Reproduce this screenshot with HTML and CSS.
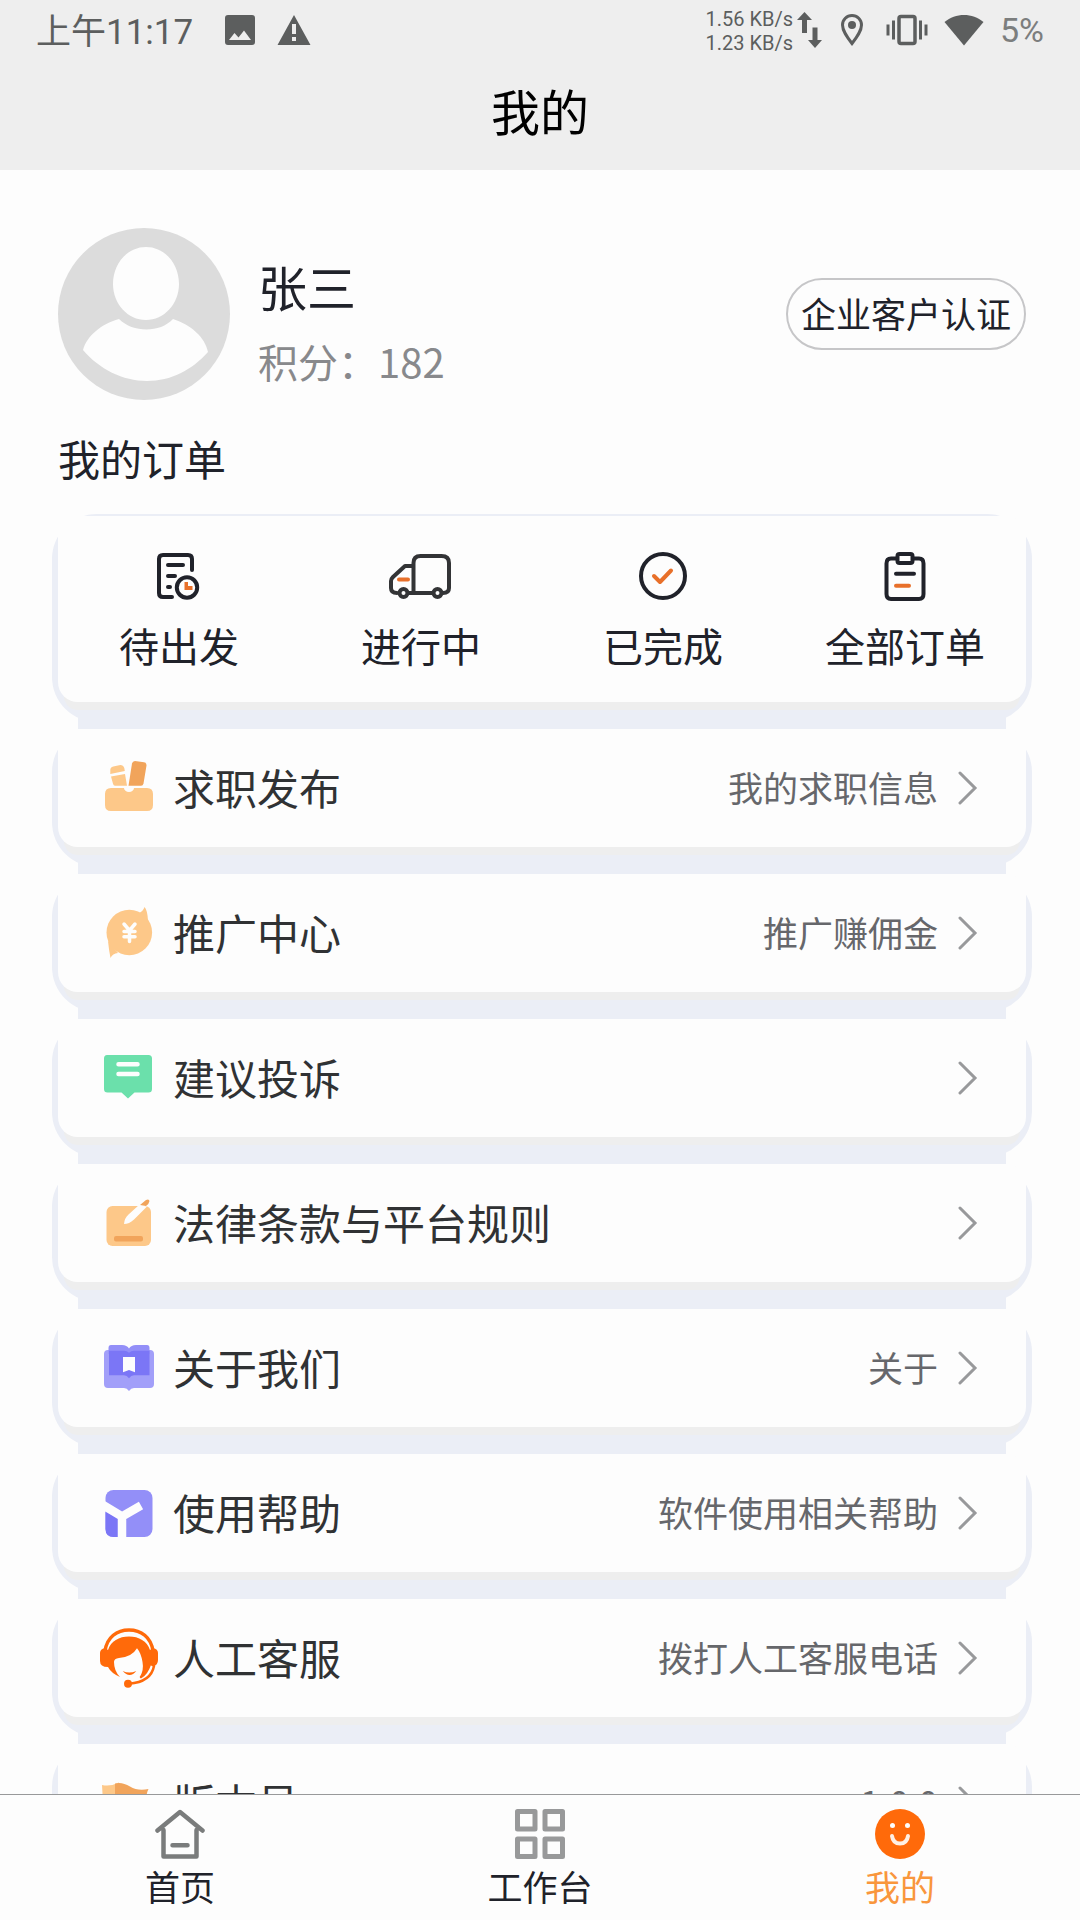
FILE: index.html
```html
<!DOCTYPE html>
<html lang="zh-CN">
<head>
<meta charset="utf-8">
<meta name="viewport" content="width=device-width, initial-scale=1">
<title>我的</title>
<link rel="stylesheet" href="styles.css">
</head>
<body>
<header class="header">
  <div class="status">
    <span class="clock">上午11:17</span>
    <svg class="ic-image" width="30" height="30" viewBox="0 0 30 30"><path fill="currentColor" fill-rule="evenodd" d="M3 0h24a3 3 0 0 1 3 3v24a3 3 0 0 1-3 3H3a3 3 0 0 1-3-3V3a3 3 0 0 1 3-3zM4 25h22l-7-9.500-5.500 7-4-4.500z"/></svg>
    <svg width="34" height="32" viewBox="0 0 34 32"><path fill="currentColor" fill-rule="evenodd" d="M17 1l16.500 30H.5zM15 10v10h4V10zM15 23v4h4v-4z"/></svg>
    <div class="status-right">
      <span class="speed">1.56 KB/s<br>1.23 KB/s</span>
      <svg class="ic-arrows" width="26" height="36" viewBox="0 0 26 36"><path fill="currentColor" d="M0 8l7.500-8L15 8h-5v13H5V8zM11 28l7 8 7-8h-4.500V15.500h-5V28z"/></svg>
      <svg class="ic-pin" width="24" height="34" viewBox="0 0 24 34"><path fill="none" stroke="currentColor" stroke-width="3" d="M12 30.500C7 24 2.500 18 2.500 12a9.500 9.500 0 0 1 19 0c0 6-4.500 12-9.500 18.500z"/><circle cx="12" cy="12" r="4" fill="currentColor"/></svg>
      <svg class="ic-vibrate" width="42" height="32" viewBox="0 0 42 32"><rect x="13" y="2.500" width="16" height="27" rx="2" fill="none" stroke="currentColor" stroke-width="3.500"/><path stroke="currentColor" stroke-width="3" d="M2 10.500v11M7.500 6.500v19M34.500 6.500v19M40 10.500v11"/></svg>
      <svg class="ic-wifi" width="40" height="32" viewBox="0 0 40 32"><path fill="currentColor" d="M20 31.500L.5 8C6 3.500 13 1 20 1s14 2.500 19.500 7z"/></svg>
      <span class="battery">5%</span>
    </div>
  </div>
  <h1 class="title">我的</h1>
</header>

<main class="content">
  <section class="profile">
    <svg class="avatar" viewBox="0 0 172 172"><circle cx="86" cy="86" r="86" fill="#dcdcdc"/><path fill="#fdfdfd" d="M88 19c19 0 33 17 33 37S106 92 88 92 55 76 55 56s14-37 33-37zM61 91c14 14 41 14 54 0 18 6 32 18 35 33-16 18-37 29-61 29s-48-12-64-31c4-14 18-26 36-31z"/></svg>
    <div class="who">
      <h2 class="name">张三</h2>
      <p class="points">积分：182</p>
    </div>
    <button class="verify" type="button">企业客户认证</button>
  </section>

  <h2 class="section-title">我的订单</h2>

  <nav class="card orders" aria-label="我的订单">
    <a class="order" href="#pending">
      <svg class="order-icon" viewBox="0 0 64 56"><g fill="none" stroke="#20222a" stroke-width="4" stroke-linecap="round"><path d="M45 22V11q0-4-4-4H16q-4 0-4 4v34q0 4 4 4h9M21 17h15M21 28h7M21 39h2"/><circle cx="40" cy="39.500" r="10.200"/></g><path fill="#e8702a" d="M37.500 34h3.500v4h4.500v4h-8z"/></svg>
      <span>待出发</span>
    </a>
    <a class="order" href="#ongoing">
      <svg class="order-icon" viewBox="0 0 64 56"><g fill="none" stroke="#333436" stroke-width="4" stroke-linecap="round" stroke-linejoin="round"><path d="M24.500 45V15q0-7 7-7h21q7.500 0 7.500 7v25q0 5-6 5M43 45H20M24 18h-8L4 29q-2 2-2 4v7q0 5 6 5"/><circle cx="14.500" cy="45" r="4"/><circle cx="48.500" cy="45" r="4"/></g><path stroke="#e8702a" stroke-width="4" stroke-linecap="round" d="M10 31.500h9"/></svg>
      <span>进行中</span>
    </a>
    <a class="order" href="#done">
      <svg class="order-icon" viewBox="0 0 64 56"><circle cx="32" cy="28" r="22" fill="none" stroke="#20222a" stroke-width="4"/><path fill="none" stroke="#e8702a" stroke-width="4" stroke-linecap="round" stroke-linejoin="round" d="M23 28l6 6 11-11.500"/></svg>
      <span>已完成</span>
    </a>
    <a class="order" href="#all">
      <svg class="order-icon" viewBox="0 0 64 56"><g fill="none" stroke="#20222a" stroke-width="4" stroke-linecap="round"><path d="M24 10.500h-6q-4.500 0-4.500 5v30.500q0 5 4.500 5h28q4.500 0 4.500-5V15.500q0-5-4.500-5H40M23 25.700h18"/><rect x="24.500" y="6" width="15" height="9" rx="2"/></g><path stroke="#e8702a" stroke-width="4" stroke-linecap="round" d="M23 37.700h13"/></svg>
      <span>全部订单</span>
    </a>
  </nav>

  <a class="card row" href="#jobs">
    <svg class="row-icon" viewBox="0 0 60 60"><path fill="#fdc889" d="M12 30h13a5 4 0 0 0 10 0h13q6 0 6 6v11q0 6-6 6H12q-6 0-6-6V36q0-6 6-6zM12 18.500l14-2.500 2 11.700H16q-1.500 0-2-2zM11.300 12q0-3 3-3.500l7-1.500q3 0 4 3l.5 3-14.500 3z"/><path fill="#f1a45b" d="M36 3l9 1.200q2.800.5 2.500 3.300l-3 18q-.5 2.300-2.500 2.300H29.500L33 5.500Q33.500 3 36 3z"/></svg>
    <span class="label">求职发布</span><span class="note">我的求职信息</span>
    <svg class="chevron" viewBox="0 0 20 34"><path d="M2 2l15 15L2 32"/></svg>
  </a>
  <a class="card row" href="#promo">
    <svg class="row-icon" viewBox="0 0 60 60"><circle cx="30.300" cy="29.500" r="22.800" fill="#fdc889"/><path fill="#fdc889" d="M40 10q4-1.500 5.500-6 3 3 3.500 14zM9 38q1 10 2.500 17 2-4.500 7.500-5z"/><path fill="none" stroke="#fdfdfd" stroke-width="3.500" stroke-linecap="round" d="M25 21l5.500 6.500L36 21M30.500 28v10.500M25 28.500h11M25 33.700h11"/></svg>
    <span class="label">推广中心</span><span class="note">推广赚佣金</span>
    <svg class="chevron" viewBox="0 0 20 34"><path d="M2 2l15 15L2 32"/></svg>
  </a>
  <a class="card row" href="#feedback">
    <svg class="row-icon" viewBox="0 0 60 60"><path fill="#6be0ab" d="M8 7h41.500q3.500 0 3.500 3.500v30.500q0 3.500-3.500 3.500H35.500l-6.500 6-6.500-6H8.500Q5 44.500 5 41V10.500Q5 7 8 7z"/><path stroke="#fdfdfd" stroke-width="4.500" stroke-linecap="round" d="M19.500 16.300h19M19.500 26h19"/></svg>
    <span class="label">建议投诉</span>
    <svg class="chevron" viewBox="0 0 20 34"><path d="M2 2l15 15L2 32"/></svg>
  </a>
  <a class="card row" href="#rules">
    <svg class="row-icon" viewBox="0 0 60 60"><rect x="7.500" y="13" width="44.500" height="40" rx="6" fill="#fdc889"/><path fill="#fdfdfd" d="M25 31q.5-6 4.500-9.500L40 12l8 1.500-13 13Q30 31 25 31z"/><path fill="#f1a45b" d="M41 12l6-5q3-1.500 3.500 1-.5 3-3.500 5zM17 43h25q2 0 2 2v1.500q0 2-2 2H17q-2 0-2-2V45q0-2 2-2z"/></svg>
    <span class="label">法律条款与平台规则</span>
    <svg class="chevron" viewBox="0 0 20 34"><path d="M2 2l15 15L2 32"/></svg>
  </a>
  <a class="card row" href="#about">
    <svg class="row-icon" viewBox="0 0 60 60"><path fill="#a29ff9" d="M9 12h42q4 0 4 4v30q0 4-4 4H35q-3 0-5 3-2-3-5-3H9q-4 0-4-4V16q0-4 4-4z"/><path fill="#938ff8" d="M12 7h11q5 0 7 3.500Q32 7 37 7h11q2.500 0 2.500 3v6h-41v-6q0-3 2.500-3z"/><path fill="#7b76f6" d="M10 12.700h15q3 0 5 2 2-2 5-2h15.500v24.600H35q-3 0-5 3-2-3-5-3H10z"/><path fill="#fdfdfd" d="M24 19h12v15.300L30 32l-6 2.300z"/></svg>
    <span class="label">关于我们</span><span class="note">关于</span>
    <svg class="chevron" viewBox="0 0 20 34"><path d="M2 2l15 15L2 32"/></svg>
  </a>
  <a class="card row" href="#help">
    <svg class="row-icon" viewBox="0 0 60 60"><rect x="6.500" y="7" width="47" height="47" rx="8" fill="#938ff8"/><path fill="#7b76f6" d="M6.500 29L20 36v18h-5.500q-8 0-8-8z"/><path fill="none" stroke="#fdfdfd" stroke-width="8.500" d="M4 22l19 11.500L42 22.500M23 32v24"/></svg>
    <span class="label">使用帮助</span><span class="note">软件使用相关帮助</span>
    <svg class="chevron" viewBox="0 0 20 34"><path d="M2 2l15 15L2 32"/></svg>
  </a>
  <a class="card row" href="#service">
    <svg class="row-icon" viewBox="0 0 60 60"><g fill="none" stroke="#ff6a0a" stroke-linecap="round"><path stroke-width="3.500" d="M6 23C8 9 18 2 30 2s22 7 24 21"/><path stroke-width="2.500" d="M55 38q-3 16-25 17.700M51 36q-3 9-9 13"/></g><path fill="#ff6a0a" d="M9 22C12 13 20 8.500 30 8.500S48 13 51 22l3-2q5 1 5 5v7q0 5-5 6.500l-3-1.500q-3 7-10 12 4-7 2.500-15Q42 25 38 20.300 33 29 20 30q-5 .500-5 4 0 9 6 15Q12 45 9 39q-8 0-8-6v-8q0-4 5-5zM23.700 43q6.500 3 13.600 0-6.500 8-13.600 0z"/><circle cx="29" cy="55.700" r="4" fill="#ff6a0a"/></svg>
    <span class="label">人工客服</span><span class="note">拨打人工客服电话</span>
    <svg class="chevron" viewBox="0 0 20 34"><path d="M2 2l15 15L2 32"/></svg>
  </a>
  <a class="card row" href="#version">
    <svg class="row-icon" viewBox="0 0 60 60"><path fill="#fdc889" d="M3 12q8 2 17-2.500v34Q12 48 5 46z"/><path fill="#f1a45b" d="M16 10.500q7-2 15 3t18.500 2.500Q46 22 46 44q-15 2-30-2z"/></svg>
    <span class="label">版本号</span><span class="note">1.0.0</span>
    <svg class="chevron" viewBox="0 0 20 34"><path d="M2 2l15 15L2 32"/></svg>
  </a>
</main>

<nav class="tabs" aria-label="主导航">
  <a class="tab" href="#home">
    <svg class="tab-icon" viewBox="0 0 50 50"><path fill="none" stroke="#7a7c7c" stroke-width="4.500" stroke-linecap="round" stroke-linejoin="round" d="M2.500 21.500L25 3l22.500 18.500M8.500 21v26.500h33V21M17.500 36.300h15"/></svg>
    <span>首页</span>
  </a>
  <a class="tab" href="#work">
    <svg class="tab-icon" viewBox="0 0 50 50"><g fill="none" stroke="#98999a" stroke-width="5" stroke-linejoin="round"><rect x="2.500" y="2.500" width="17.500" height="17.500"/><rect x="30" y="2.500" width="17.500" height="17.500"/><rect x="2.500" y="30" width="17.500" height="17.500"/><rect x="30" y="30" width="17.500" height="17.500"/></g></svg>
    <span>工作台</span>
  </a>
  <a class="tab active" href="#me" aria-current="page">
    <svg class="tab-icon" viewBox="0 0 50 50"><circle cx="25" cy="25" r="25" fill="#ff6a0a"/><circle cx="17.500" cy="16.500" r="2.500" fill="#fdfdfd"/><circle cx="32.500" cy="16.500" r="2.500" fill="#fdfdfd"/><path fill="none" stroke="#fff0e4" stroke-width="4" stroke-linecap="round" d="M17 27q1 7.500 8 7.500t8-7.500"/></svg>
    <span>我的</span>
  </a>
</nav>
</body>
</html>
```
FILE: styles.css
```css
* {
  box-sizing: border-box;
  margin: 0;
}

body {
  display: flex;
  flex-direction: column;
  height: 100vh;
  background: #fdfdfd;
  color: #20222a;
  font-family: "Noto Sans CJK SC", sans-serif;
  font-size: 42px;
}

a {
  color: inherit;
  text-decoration: none;
}

h1,
h2 {
  font-weight: 400;
}

svg {
  flex: none;
}

/* Header */
.header {
  flex: none;
  background: #eeeeee;
}

.status {
  display: flex;
  align-items: center;
  height: 60px;
  padding: 0 36px;
  color: #5c5e5e;
  font-family: Roboto, "Noto Sans CJK SC", sans-serif;
}

.clock {
  padding-bottom: 4px;
  font-size: 35px;
}

.ic-image {
  margin: 0 22px 0 32px;
}

.status-right {
  display: flex;
  align-items: center;
  margin-left: auto;
}

.speed {
  padding-top: 2px;
  font-size: 20px;
  line-height: 24px;
}

.ic-arrows {
  margin: 0 17px 0 4px;
}

.ic-vibrate {
  margin: 0 16px 0 22px;
}

.battery {
  margin-left: 16px;
  color: #7c7e7e;
  font-size: 34px;
}

.title {
  height: 110px;
  color: #000000;
  font-size: 49px;
  line-height: 100px;
  text-align: center;
}

/* Scrolling content */
.content {
  flex: 1;
  position: relative;
  z-index: 0;
  min-height: 0;
  overflow-y: auto;
  scrollbar-width: none;
  padding: 58px 54px 27px 58px;
}

.profile {
  display: flex;
  align-items: center;
}

.avatar {
  width: 172px;
  height: 172px;
}

.who {
  flex: 1;
  padding: 22px 0 0 28px;
}

.name {
  font-size: 49px;
  line-height: 72px;
}

.points {
  color: #88898c;
  font-size: 40px;
  line-height: 78px;
}

.verify {
  height: 72px;
  padding: 0 13px 3px;
  border: 2px solid #c6c6c8;
  border-radius: 36px;
  background: transparent;
  color: inherit;
  font: inherit;
  font-size: 35px;
}

.section-title {
  font-size: 42px;
  line-height: 116px;
}

.card {
  position: relative;
  border-radius: 20px;
  background: #fdfdfd;
  box-shadow:
    0 14px 0 -6px #eeeeee,
    0 47px 0 -20px #ebeef6;
}

/* Soft halo: rounder than the card, so its corners taper off */
.card::before {
  content: "";
  position: absolute;
  z-index: -1;
  inset: -2px -6px -20px;
  border-radius: 45px;
  background: #ebeef6;
}

.orders {
  display: grid;
  grid-template-columns: repeat(4, 1fr);
  height: 186px;
  padding-top: 32px;
}

.order {
  display: flex;
  flex-direction: column;
  align-items: center;
  gap: 12px;
  font-size: 40px;
  line-height: 58px;
  white-space: nowrap;
}

.order-icon {
  width: 64px;
  height: 56px;
}

.row {
  display: flex;
  align-items: center;
  height: 118px;
  margin-top: 27px;
  padding: 0 48px 0 41px;
  color: #303234;
}

.row-icon {
  width: 60px;
  height: 60px;
  margin-right: 14px;
}

.label,
.note {
  padding-bottom: 4px;
}

.note {
  margin-left: auto;
  color: #66676b;
  font-size: 35px;
}

.chevron {
  width: 20px;
  height: 34px;
  margin-left: 20px;
  fill: none;
  stroke: #98999b;
  stroke-width: 3px;
  stroke-linecap: round;
}

.label + .chevron {
  margin-left: auto;
}

/* Bottom tabs */
.tabs {
  display: grid;
  grid-template-columns: repeat(3, 1fr);
  flex: none;
  height: 126px;
  padding-top: 14px;
  border-top: 1px solid #98999a;
  background: #fdfdfd;
}

.tab {
  display: flex;
  flex-direction: column;
  align-items: center;
  gap: 4px;
  font-size: 35px;
  line-height: 46px;
}

.tab-icon {
  width: 50px;
  height: 50px;
}

.active {
  color: #f9963c;
}
```
